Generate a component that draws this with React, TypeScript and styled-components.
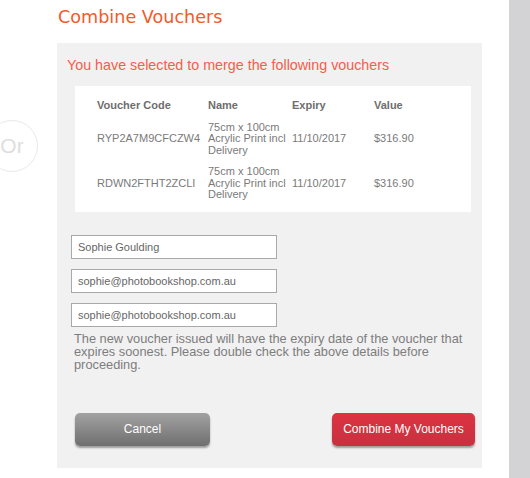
import React from "react";
import styled, { createGlobalStyle } from "styled-components";

const Global = createGlobalStyle`
  html, body { margin: 0; padding: 0; background: #fff; }
  body { font-family: "Liberation Sans", Arial, sans-serif; }
`;

const Page = styled.div`
  width: 530px;
  height: 478px;
  display: flex;
  overflow: hidden;
  position: relative;
`;

const Gutter = styled.div`
  width: 57px;
  flex: none;
  padding-top: 120px;
  box-sizing: border-box;
`;

const OrBadge = styled.div`
  width: 52px;
  height: 52px;
  margin-left: -14px;
  border: 1px solid #e9e9e9;
  border-radius: 50%;
  box-sizing: border-box;
  display: flex;
  align-items: center;
  justify-content: center;
  color: #dedede;
  font-size: 21px;
  font-family: "Liberation Sans", Arial, sans-serif;
`;

const Main = styled.div`
  width: 425px;
  flex: none;
  display: flex;
  flex-direction: column;
`;

const Title = styled.h1`
  margin: 0;
  height: 43px;
  padding: 7px 0 0 1px;
  box-sizing: border-box;
  font-family: "DejaVu Sans", Verdana, sans-serif;
  font-weight: normal;
  font-size: 17.6px;
  color: #f15a2b;
`;

const Panel = styled.div`
  background: #f1f1f1;
  height: 425px;
  box-sizing: border-box;
  padding: 13px 11px 0 10px;
  display: flex;
  flex-direction: column;
`;

const Subtitle = styled.p`
  margin: 0;
  font-size: 14.3px;
  line-height: 18px;
  color: #f2604a;
`;

const TableBox = styled.div`
  margin: 12px 0 0 8px;
  background: #fff;
  height: 126px;
  box-sizing: border-box;
  padding: 14px 0 0 22px;
  display: grid;
  grid-template-columns: 111px 84px 82px auto;
  grid-auto-rows: auto;
  align-content: start;
  align-items: center;
  row-gap: 9px;
  font-size: 11px;
  line-height: 11.7px;
  color: #7a7a7a;
`;

const Th = styled.div`
  font-weight: bold;
  color: #6e6e6e;
  padding-bottom: 1px;
`;

const Td = styled.div`
  padding-right: 2px;
`;

const Fields = styled.div`
  margin: 23px 0 0 4px;
  display: flex;
  flex-direction: column;
  gap: 10px;
`;

const Input = styled.input`
  width: 206px;
  height: 24px;
  box-sizing: border-box;
  border: 1px solid #a9a9a9;
  background: #fff;
  padding: 0 6px;
  font-family: "Liberation Sans", Arial, sans-serif;
  font-size: 11px;
  color: #666;
  outline: none;
`;

const Note = styled.p`
  margin: 5px 0 0 7px;
  width: 396px;
  font-size: 12.8px;
  line-height: 13px;
  color: #7d7d7d;
`;

const Actions = styled.div`
  margin: 42px -4px 0 0;
  padding: 0 0 0 8px;
  display: flex;
  justify-content: space-between;
`;

const Button = styled.button<{ $variant: "grey" | "red" }>`
  height: 33px;
  width: ${(p) => (p.$variant === "grey" ? "135px" : "143px")};
  border: none;
  border-radius: 5px;
  color: #fff;
  font-family: "Liberation Sans", Arial, sans-serif;
  font-size: 12px;
  padding: 0 0 2px;
  cursor: pointer;
  box-shadow: 0 2px 2px rgba(0, 0, 0, 0.35);
  background: ${(p) =>
    p.$variant === "grey"
      ? "linear-gradient(#a2a2a2, #6f6f6f)"
      : "linear-gradient(#dd3342, #c7313f)"};
`;

const SideBar = styled.div`
  margin-left: auto;
  width: 21px;
  background: #d3d3d5;
`;

const vouchers = [
  { code: "RYP2A7M9CFCZW4", name: "75cm x 100cm Acrylic Print incl Delivery", expiry: "11/10/2017", value: "$316.90" },
  { code: "RDWN2FTHT2ZCLI", name: "75cm x 100cm Acrylic Print incl Delivery", expiry: "11/10/2017", value: "$316.90" },
];

export default function App() {
  return (
    <>
      <Global />
      <Page>
        <Gutter>
          <OrBadge>Or</OrBadge>
        </Gutter>
        <Main>
          <Title>Combine Vouchers</Title>
          <Panel>
            <Subtitle>You have selected to merge the following vouchers</Subtitle>
            <TableBox>
              <Th>Voucher Code</Th>
              <Th>Name</Th>
              <Th>Expiry</Th>
              <Th>Value</Th>
              {vouchers.map((v) => (
                <React.Fragment key={v.code}>
                  <Td>{v.code}</Td>
                  <Td>{v.name}</Td>
                  <Td>{v.expiry}</Td>
                  <Td>{v.value}</Td>
                </React.Fragment>
              ))}
            </TableBox>
            <Fields>
              <Input defaultValue="Sophie Goulding" />
              <Input defaultValue="sophie@photobookshop.com.au" />
              <Input defaultValue="sophie@photobookshop.com.au" />
            </Fields>
            <Note>
              The new voucher issued will have the expiry date of the voucher that
              expires soonest. Please double check the above details before
              proceeding.
            </Note>
            <Actions>
              <Button $variant="grey">Cancel</Button>
              <Button $variant="red">Combine My Vouchers</Button>
            </Actions>
          </Panel>
        </Main>
        <SideBar />
      </Page>
    </>
  );
}
